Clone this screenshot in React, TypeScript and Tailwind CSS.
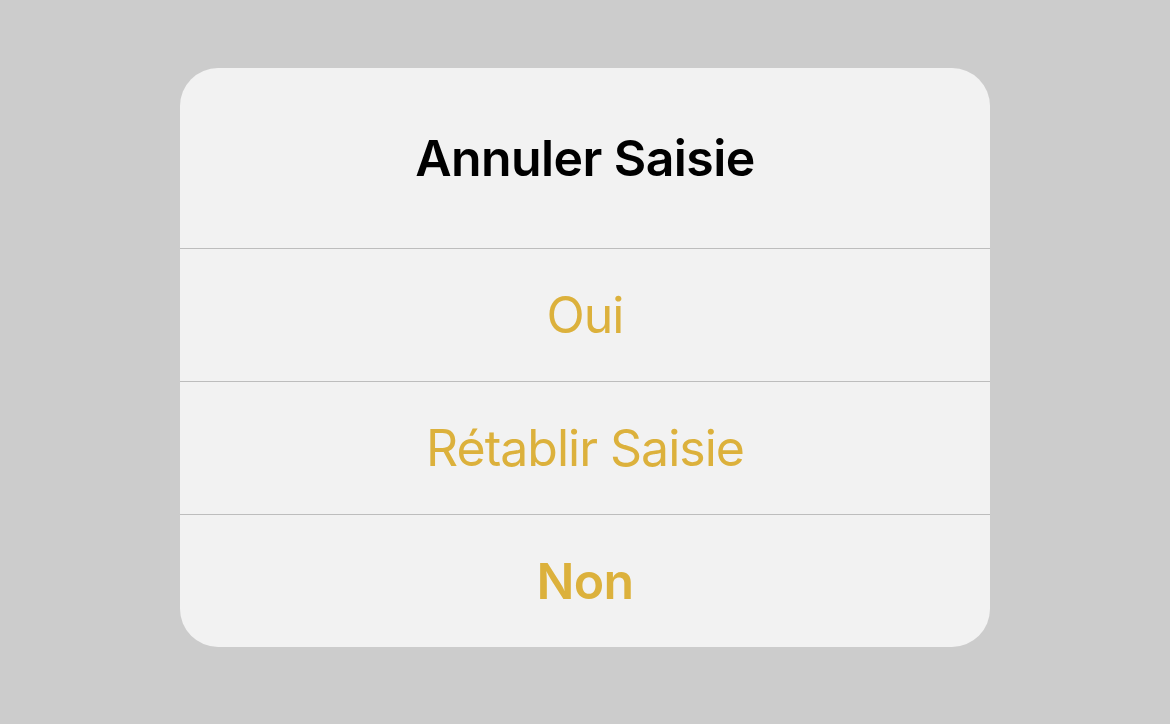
import React from "react";

export default function App() {
  const font = { fontFamily: "Inter, 'Noto Sans', sans-serif" };
  return (
    <div className="w-[1170px] h-[724px] bg-[#cccccc] flex justify-center items-start pt-[68px]" style={font}>
      <div className="w-[810px] rounded-[38px] bg-[#f2f2f2] overflow-hidden flex flex-col">
        <div className="h-[180px] flex items-center justify-center text-black text-[50px] font-semibold tracking-[-0.6px]">
          Annuler Saisie
        </div>
        <div className="h-[133px] border-t border-[#bdbdbd] flex items-center justify-center text-[#dcb13c] text-[50px] font-normal tracking-[-1px]">
          Oui
        </div>
        <div className="h-[133px] border-t border-[#bdbdbd] flex items-center justify-center text-[#dcb13c] text-[50px] font-normal tracking-[-1px]">
          Rétablir Saisie
        </div>
        <div className="h-[133px] border-t border-[#bdbdbd] flex items-center justify-center text-[#dcb13c] text-[50px] font-semibold tracking-[-0.6px]">
          Non
        </div>
      </div>
    </div>
  );
}
